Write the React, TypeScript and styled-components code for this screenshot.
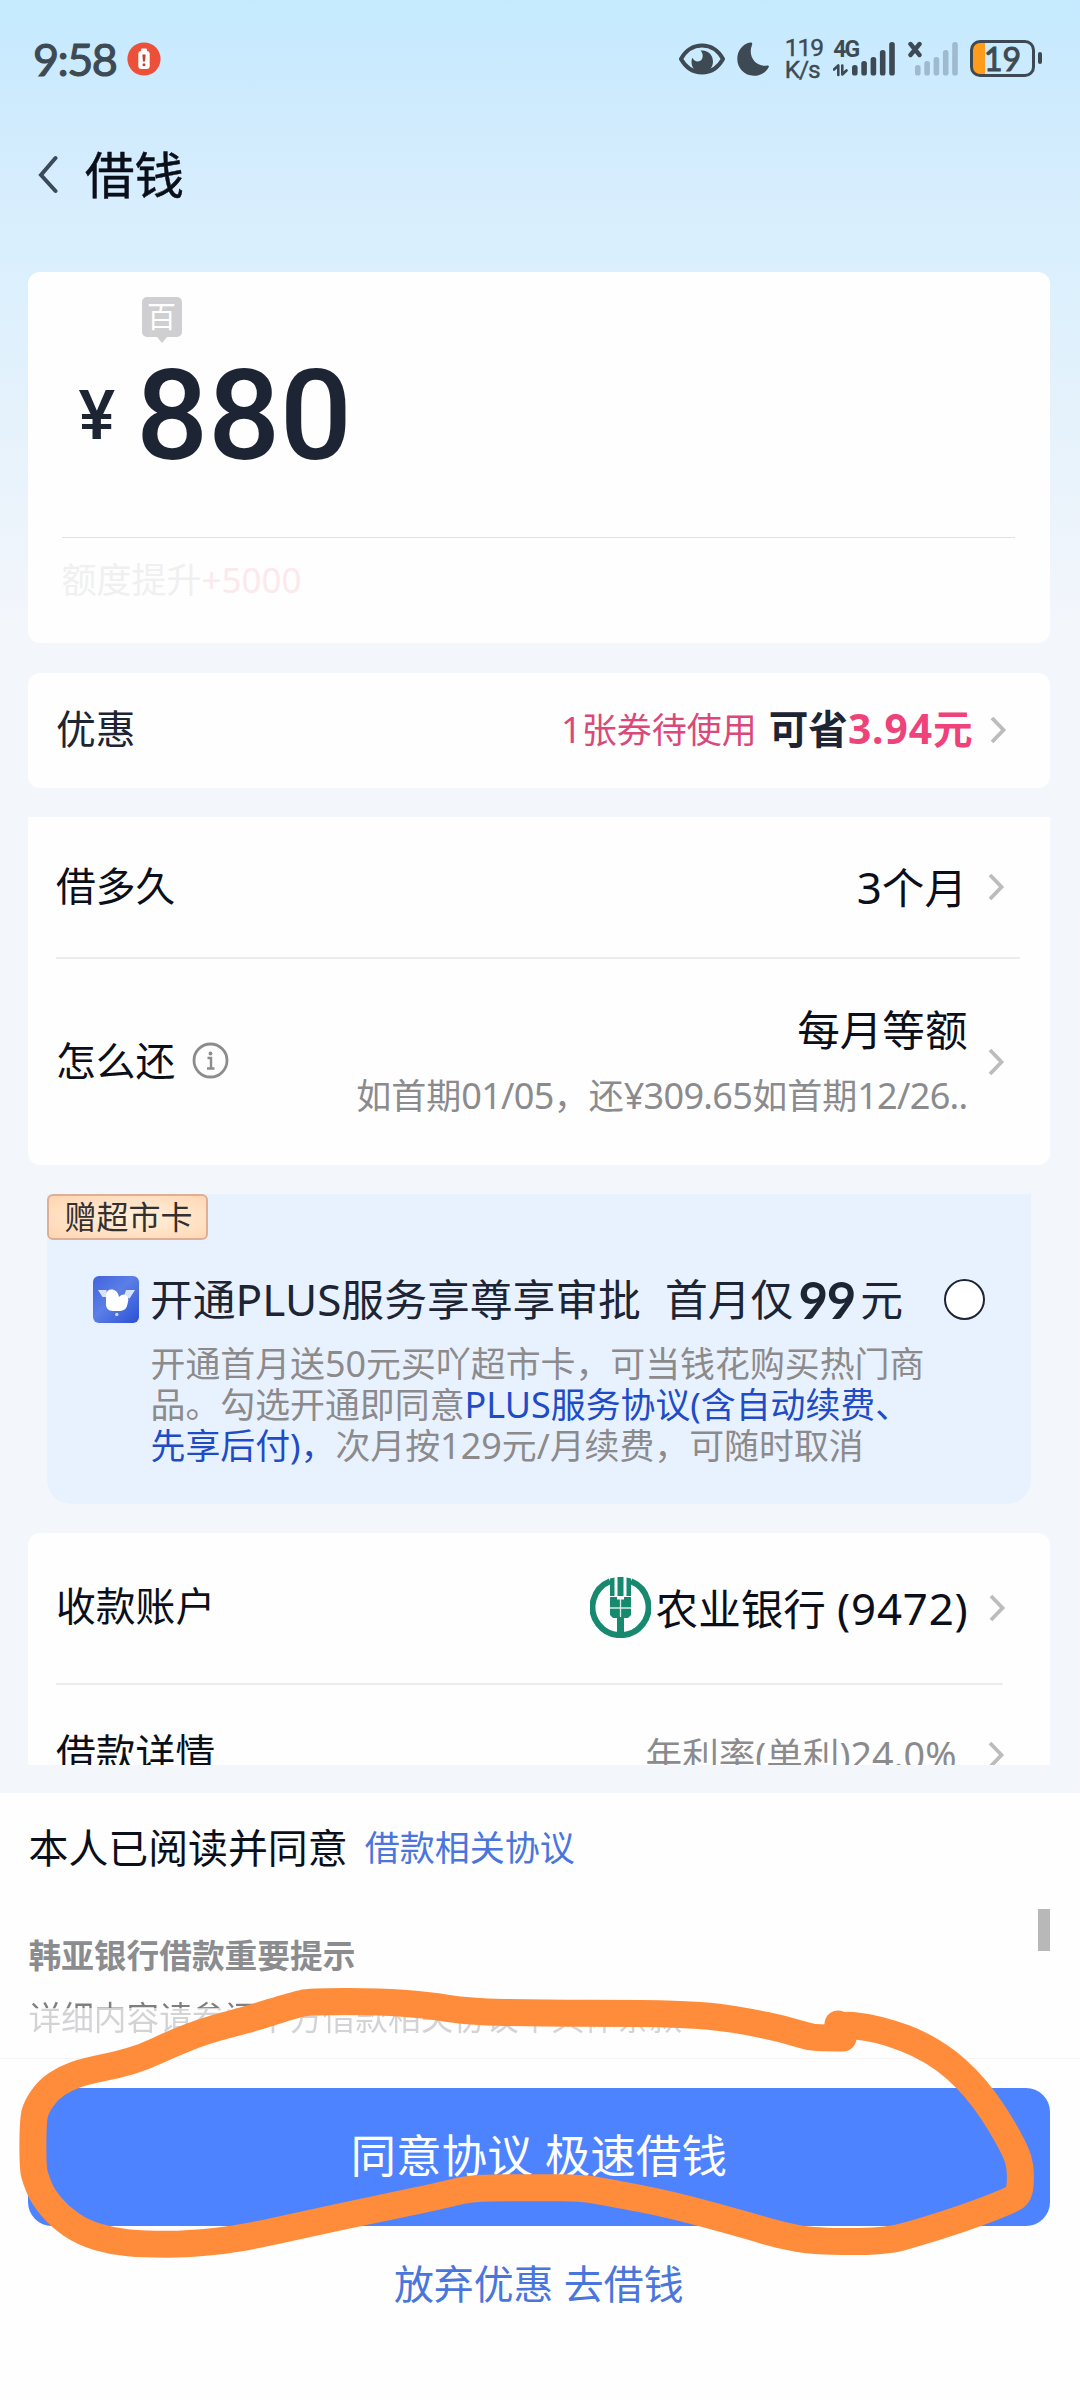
import React from "react";
import styled, { createGlobalStyle } from "styled-components";

const INK = "#0b0f1a";
const NAVY = "#1d2433";
const STATUS = "#3e4a53";
const BLUE = "#4a76dc";

const GlobalStyle = createGlobalStyle`
  *, *::before, *::after { box-sizing: border-box; }
  body { margin: 0; }
`;

const Page = styled.div`
  position: relative;
  width: 1080px;
  height: 2400px;
  overflow: hidden;
  display: flex;
  flex-direction: column;
  background: linear-gradient(180deg, #c5eaff 0, #d0ebfd 120px, #d8eefd 210px, #dcf0fd 290px, #e6f2fb 430px, #f3f6fb 620px, #f4f6fb 100%);
  font-family: "Noto Sans", "Noto Sans CJK SC", sans-serif;
  color: ${INK};
  white-space: nowrap;
`;

/* ---------- status bar ---------- */

const StatusBar = styled.header`
  height: 117px;
  padding: 0 38px 0 33px;
  display: flex;
  justify-content: space-between;
  align-items: center;
  color: ${STATUS};
`;

const StatusGroup = styled.div<{ $gap: number }>`
  display: flex;
  align-items: center;
  gap: ${(p) => p.$gap}px;
  svg { display: block; flex: none; }
`;

const Clock = styled.span`
  width: 83px;
  font: 400 45px/50px Lato, sans-serif;
  letter-spacing: -1.6px;
  -webkit-text-stroke: 1.1px ${STATUS};
`;

const NetSpeed = styled.div`
  width: 36px;
  margin-left: 3px;
  font: 400 24.5px/22px Roboto, sans-serif;
  letter-spacing: -1.1px;
  -webkit-text-stroke: 0.4px ${STATUS};
`;

const Signal = styled.div`
  width: 62px;
  height: 36px;
  position: relative;
`;

const NetType = styled.span`
  position: absolute;
  left: 0;
  top: -4px;
  font: 700 23px/26px Roboto, sans-serif;
  letter-spacing: -2px;
`;

const Battery = styled.div`
  width: 65px;
  height: 37px;
  margin-right: 7px;
  position: relative;
  border: 3px solid ${STATUS};
  border-radius: 10px;
  display: flex;
  align-items: center;
  justify-content: center;
  background: linear-gradient(90deg, #ff9c1c 11.5px, transparent 11.5px);
  font: 400 32px/31px Lato, sans-serif;
  -webkit-text-stroke: 1px ${STATUS};
  &::after {
    content: "";
    position: absolute;
    right: -10px;
    top: 9px;
    width: 4.5px;
    height: 12px;
    border-radius: 2px;
    background: ${STATUS};
  }
`;

/* ---------- navigation ---------- */

const NavBar = styled.nav`
  height: 155px;
  padding: 0 0 39px 38px;
  display: flex;
  align-items: center;
  gap: 27px;
`;

const NavTitle = styled.h1`
  margin: 0;
  font-size: 49.5px;
  line-height: 60px;
  font-weight: 400;
  -webkit-text-stroke: 0.5px ${INK};
`;

/* ---------- content ---------- */

const Content = styled.main`
  height: 1493px;
  overflow: hidden;
  padding: 0 30px 0 27.5px;
  display: flex;
  flex-direction: column;
`;

const Card = styled.section<{ $h: number; $mt?: number; $radius?: string }>`
  flex: none;
  height: ${(p) => p.$h}px;
  margin-top: ${(p) => p.$mt ?? 0}px;
  border-radius: ${(p) => p.$radius ?? "12px"};
  background: #fefefe;
`;

const AmountTop = styled.div`
  height: 266px;
  margin: 0 35px 0 34px;
  padding: 25px 0 0 16px;
  border-bottom: 1.5px solid #e2e2e4;
`;

const UnitBadge = styled.div`
  position: relative;
  width: 40px;
  height: 40px;
  margin-left: 64px;
  border-radius: 5px;
  background: #cfcfd1;
  color: #fff;
  display: flex;
  align-items: center;
  justify-content: center;
  font: 400 29px/40px "Noto Sans", "Noto Sans CJK SC", sans-serif;
  &::after {
    content: "";
    position: absolute;
    left: 15px;
    top: 40px;
    border: 5px solid transparent;
    border-top: 6px solid #cfcfd1;
    border-bottom: 0;
  }
`;

const Amount = styled.div`
  height: 150px;
  margin-top: 4px;
  display: flex;
  align-items: center;
  color: ${NAVY};
  font-family: Roboto, sans-serif;
  font-weight: 500;
`;

const Yen = styled.span`
  width: 58.5px;
  padding-left: 1px;
  font-size: 69px;
  line-height: 80px;
`;

const Figure = styled.span`
  font-size: 127px;
  line-height: 150px;
  letter-spacing: -0.3px;
`;

const Boost = styled.p`
  margin: 0;
  padding: 22px 0 0 34px;
  font-size: 35px;
  line-height: 40px;
  color: #f0f0f1;
`;

const BoostValue = styled.span`
  color: #fce9ed;
`;

const Row = styled.div<{ $h: number; $pr?: number }>`
  height: ${(p) => p.$h}px;
  padding: 0 ${(p) => p.$pr ?? 45.5}px 0 28.5px;
  display: flex;
  align-items: center;
  justify-content: space-between;
`;

const Label = styled.span<{ $color?: string; $lift?: number }>`
  display: inline-flex;
  align-items: center;
  gap: 16.5px;
  padding-bottom: ${(p) => p.$lift ?? 2}px;
  font-size: 39.8px;
  line-height: 48px;
  color: ${(p) => p.$color ?? INK};
`;

const Value = styled.div<{ $gap?: number }>`
  display: flex;
  align-items: center;
  gap: ${(p) => p.$gap ?? 22}px;
  svg { display: block; flex: none; }
`;

const ChevronSlot = styled.span`
  margin-left: 17px;
`;

const ValueText = styled.span`
  font-size: 42.6px;
  line-height: 52px;
`;

const Num = styled.span<{ $track?: number }>`
  font-size: 1.03em;
  letter-spacing: ${(p) => p.$track ?? 0}px;
`;

const Stack = styled.div`
  display: flex;
  flex-direction: column;
  align-items: flex-end;
  gap: 15px;
`;

const Muted = styled.span<{ $size?: number }>`
  font-size: ${(p) => p.$size ?? 35}px;
  line-height: 50px;
  color: #8b8b8e;
`;

const Coupon = styled.span`
  padding-bottom: 2px;
  font-size: 35px;
  line-height: 46px;
  color: #d94a7a;
`;

const Saving = styled.span`
  margin-left: 12px;
  padding-bottom: 3px;
  font-size: 39.6px;
  line-height: 48px;
  font-weight: 700;
  color: ${NAVY};
`;

const Pink = styled.span`
  color: #ee437a;
`;

const Line = styled.hr<{ $right: number }>`
  height: 2px;
  margin: 0 ${(p) => p.$right}px 0 28.5px;
  border: 0;
  background: #ececec;
`;

/* ---------- membership offer ---------- */

const Offer = styled.section`
  flex: none;
  height: 310px;
  margin: 29px 19px 0 19.5px;
  border-radius: 0 0 24px 24px;
  background: #e8f2ff;
`;

const OfferTag = styled.div`
  width: 161px;
  height: 46px;
  border: 2px solid #dfae96;
  border-radius: 6px;
  background: radial-gradient(ellipse at 55% 50%, #fff0dc 0, #ffe6cc 40%, #ffd5b0 100%);
  display: flex;
  align-items: center;
  justify-content: center;
  padding-left: 2px;
  font-size: 32px;
  line-height: 42px;
  color: #35302e;
`;

const OfferHead = styled.div`
  height: 56px;
  margin-top: 32px;
  padding: 0 46px;
  display: flex;
  align-items: center;
  color: ${NAVY};
  font-size: 42.8px;
  line-height: 56px;
  svg { display: block; flex: none; }
`;

const OfferTitle = styled.span`
  margin-left: 11px;
`;

const OfferPrice = styled.span`
  margin-left: 24px;
  display: flex;
  align-items: center;
`;

const PriceNum = styled.b`
  width: 67px;
  text-align: center;
  font: 700 51px/56px Lato, sans-serif;
  letter-spacing: -1.2px;
`;

const Radio = styled.span`
  width: 41px;
  height: 41px;
  margin-left: auto;
  border: 2.5px solid ${NAVY};
  border-radius: 50%;
  background: #fff;
`;

const OfferText = styled.p`
  margin: 15px 0 0 103.5px;
  font-size: 34.9px;
  line-height: 41px;
  color: #8d8a8b;
`;

const Terms = styled.span`
  color: #1f4cc6;
`;

/* ---------- footer ---------- */

const Footer = styled.footer`
  height: 607px;
  margin-top: 28px;
  background: #fefefe;
`;

const Notice = styled.div`
  height: 266px;
  padding: 30px 30px 0 28.5px;
  border-bottom: 1px solid #f5f5f5;
`;

const Agree = styled.div`
  display: flex;
  align-items: center;
  gap: 17px;
  font-size: 39.9px;
  line-height: 50px;
`;

const AgreeLink = styled.a`
  font-size: 35px;
  color: ${BLUE};
`;

const NoticeScroll = styled.div`
  height: 149px;
  margin-top: 36px;
  display: flex;
  justify-content: space-between;
`;

const NoticeText = styled.div`
  font-size: 32.7px;
  line-height: 44px;
  color: #8b8c90;
`;

const NoticeTitle = styled.div`
  margin-top: 25px;
  font-weight: 700;
`;

const NoticeBody = styled.div`
  margin-top: 18px;
  color: transparent;
  background: linear-gradient(180deg, #7e7e80 12px, #d3d3d5 12px);
  background-clip: text;
  -webkit-background-clip: text;
`;

const Thumb = styled.div`
  width: 12px;
  height: 42px;
  background: #b8b8b8;
`;

const Actions = styled.div`
  padding: 29px 30px 0 27.5px;
  display: flex;
  flex-direction: column;
  align-items: center;
`;

const Primary = styled.button`
  width: 100%;
  height: 138px;
  padding: 0 0 4px 0;
  border: 0;
  border-radius: 24px;
  background: #4d83ff;
  color: #fff;
  font: 400 45.6px/60px "Noto Sans", "Noto Sans CJK SC", sans-serif;
`;

const Secondary = styled.a`
  margin-top: 33px;
  font-size: 39.9px;
  line-height: 50px;
  color: ${BLUE};
`;

const Scribble = styled.svg`
  position: absolute;
  left: 0;
  top: 1960px;
  pointer-events: none;
`;

/* ---------- drawings ---------- */

const Chevron = () => (
  <svg width="17" height="28" viewBox="0 0 17 28" fill="none" stroke="#bcbcbc" strokeWidth="3.8">
    <path d="M2 2L13.500 14L2 26" />
  </svg>
);

const BackIcon = () => (
  <svg width="20" height="40" viewBox="0 0 20 40" fill="none" stroke="#3b4a58" strokeWidth="4" strokeLinecap="round">
    <path d="M17.500 3L3 20L17.500 36" />
  </svg>
);

const LowBattery = () => (
  <svg width="34" height="34" viewBox="0 0 34 34">
    <circle cx="17" cy="17" r="16.600" fill="#ec5039" />
    <rect x="14" y="6.500" width="6" height="4" rx="1" fill="#fff" />
    <rect x="11.300" y="9" width="11.400" height="18" rx="3" fill="#fff" />
    <path d="M15.400 12.500h3.200l-.5 7h-2.200z" fill="#b8452f" />
    <circle cx="17" cy="22.700" r="1.500" fill="#b8452f" />
  </svg>
);

const EyeIcon = () => (
  <svg width="46" height="32" viewBox="0 0 46 32">
    <path d="M2 16C7 7 14.500 2.500 23 2.500S39 7 44 16C39 25 31.500 29.500 23 29.500S7 25 2 16Z" fill="none" stroke={STATUS} strokeWidth="4" strokeLinejoin="round" />
    <path d="M21.500 7.500C29 6.500 34 12 34 18.500C34 25 29 29.500 23.500 29.500C17 29.500 12.500 25 12.500 19C12.500 17.500 12.800 16 13.300 14.800C15 18.300 18.500 19.500 21.300 17.800C24.500 15.800 24.500 10.500 21.500 7.500Z" fill={STATUS} />
  </svg>
);

const MoonIcon = () => (
  <svg width="32" height="34" viewBox="0 0 32 34">
    <path d="M13 .5C15 .3 15.700 1.300 15 3C10.500 14 18.500 25.500 30 23.500C31.800 23.200 32.300 24.200 31.500 25.500C28.500 31 23 33.700 16.800 33.700C7.500 33.700 .3 26.300 .3 17C.3 8.500 5.500 2 13 .5Z" fill={STATUS} />
  </svg>
);

const BAR_TOPS = [24, 20, 16, 9, 1];

const Bars = ({ x, color }: { x: number; color: string }) => (
  <g fill={color}>
    {BAR_TOPS.map((top, i) => (
      <rect key={top} x={x + i * 9.3} y={top} width="5.600" height={34.500 - top} rx="2.600" />
    ))}
  </g>
);

const DataBars = () => (
  <svg width="62" height="36" viewBox="0 0 62 36">
    <path d="M1 28.500L5.300 24.500V34M9.300 24.500V33.500L13.500 29.500" fill="none" stroke={STATUS} strokeWidth="2.600" strokeLinejoin="round" strokeLinecap="round" />
    <Bars x={19} color={STATUS} />
  </svg>
);

const NoBars = () => (
  <svg width="50" height="36" viewBox="0 0 50 36">
    <path d="M2.500 3L11.500 14M11.500 3L2.500 14" stroke={STATUS} strokeWidth="4.400" strokeLinecap="round" />
    <Bars x={7} color="#9fbace" />
  </svg>
);

const InfoIcon = () => (
  <svg width="37" height="37" viewBox="0 0 37 37" fill="none" stroke="#8c8c8f">
    <circle cx="18.500" cy="18.500" r="16.500" strokeWidth="2.800" />
    <path d="M15.500 16h3.500v10.500M15 26.500h7.500" strokeWidth="2.400" />
    <circle cx="18.500" cy="11.500" r="1.900" fill="#8c8c8f" stroke="none" />
  </svg>
);

const BirdLogo = () => (
  <svg width="46" height="47" viewBox="0 0 46 47">
    <defs>
      <linearGradient id="bird" x1="0" y1="0" x2="1" y2="1">
        <stop offset="0" stopColor="#4163dd" />
        <stop offset=".45" stopColor="#5b7fe6" />
        <stop offset="1" stopColor="#2a50d6" />
      </linearGradient>
    </defs>
    <rect width="46" height="47" rx="6" fill="url(#bird)" />
    <path d="M5 14H13.500L14 21H9.500Z M33 14H42L36.500 22.500L31 20Z" fill="#d9e4fb" />
    <path d="M13 20C13 13.500 18 13 21 14C24 15 25.500 18 26 21C28 18.500 31 17.500 33.500 19.500C36 21.500 35.500 25 34.500 28C33.500 33 31 35 26 35H20C15 35 13 32 13 28Z" fill="#fff" />
    <circle cx="23.800" cy="38.500" r="1.700" fill="#c9d6fa" />
  </svg>
);

const BankLogo = () => (
  <svg width="61" height="61" viewBox="0 0 61 61">
    <path d="M20 4.200A28 28 0 1 0 41 4.200" fill="none" stroke="#17896e" strokeWidth="6" />
    <path d="M20 1.500L24.500 .5V19H20ZM36.500 .5L41 1.500V19H36.500ZM27.500 0H33.500V19H27.500Z" fill="#17896e" />
    <path d="M20 20H27V22.500H34V20H41V38L38 41H34V58H27V41H23L20 38Z" fill="#17896e" />
    <path d="M30.500 22V40M20 31H41" stroke="#d8f0e8" strokeWidth="1.300" />
  </svg>
);

const MARKER: [number, number][] = [
  [843, 2038], [818, 2038], [806, 2036], [781, 2028.5], [750, 2022], [719, 2017], [680, 2014], [640, 2013.3],
  [540, 2013.3], [468, 2011.700], [427, 2005], [379, 2001.500], [310, 2001.700], [294, 2005], [248, 2019.500],
  [206, 2030.500], [172, 2043.700], [144, 2057], [117, 2065], [86, 2071], [65, 2078.500], [48, 2090],
  [37, 2106], [33, 2119], [32.800, 2168], [36, 2180], [43, 2196.700], [60, 2217], [83, 2232.500], [113, 2241.500],
  [144, 2244.300], [189, 2244.300], [241, 2238.500], [310, 2223.300], [372, 2210], [444, 2195], [460, 2190.500], [482, 2187.700],
  [540, 2187.700], [581, 2187.700], [609, 2192.500], [671, 2204.500], [746, 2225], [781, 2235.500], [815, 2241.500],
  [884, 2241.700], [919, 2232.500], [970, 2216], [1005, 2202.500], [1018, 2196], [1020.400, 2185],
  [1020.400, 2167], [1016, 2152], [1001, 2124.500], [984, 2099], [967, 2079], [946, 2060], [919, 2043.500],
  [891, 2033], [867, 2027], [838, 2024], [843, 2038],
];

const markerPath = MARKER.slice(1, -1).reduce((d, [x, y], i) => {
  const [nx, ny] = MARKER[i + 2];
  return `${d}Q${x} ${y} ${(x + nx) / 2} ${(y + ny) / 2}`;
}, `M${MARKER[0][0]} ${MARKER[0][1]}`) + "L838 2024L843 2038";

export default function App() {
  return (
    <Page>
      <GlobalStyle />
      <StatusBar>
        <StatusGroup $gap={11}>
          <Clock>9:58</Clock>
          <LowBattery />
        </StatusGroup>
        <StatusGroup $gap={12.4}>
          <EyeIcon />
          <MoonIcon />
          <NetSpeed>119<br />K/s</NetSpeed>
          <Signal>
            <NetType>4G</NetType>
            <DataBars />
          </Signal>
          <NoBars />
          <Battery>19</Battery>
        </StatusGroup>
      </StatusBar>

      <NavBar>
        <BackIcon />
        <NavTitle>借钱</NavTitle>
      </NavBar>

      <Content>
        <Card $h={371}>
          <AmountTop>
            <UnitBadge>百</UnitBadge>
            <Amount>
              <Yen>¥</Yen>
              <Figure>880</Figure>
            </Amount>
          </AmountTop>
          <Boost>额度提升<BoostValue>+5000</BoostValue></Boost>
        </Card>

        <Card $h={115} $mt={29.500}>
          <Row $h={115} $pr={43.500}>
            <Label $color={NAVY} $lift={3}>优惠</Label>
            <Value $gap={0}>
              <Coupon><Num>1</Num>张券待使用</Coupon>
              <Saving>可省<Pink><Num $track={0.9}>3.94</Num>元</Pink></Saving>
              <ChevronSlot><Chevron /></ChevronSlot>
            </Value>
          </Row>
        </Card>

        <Card $h={348} $mt={29} $radius="0 0 12px 12px">
          <Row $h={140}>
            <Label>借多久</Label>
            <Value $gap={20.500}>
              <ValueText><Num>3</Num>个月</ValueText>
              <Chevron />
            </Value>
          </Row>
          <Line $right={30} />
          <Row $h={206}>
            <Label>怎么还<InfoIcon /></Label>
            <Value $gap={20}>
              <Stack>
                <ValueText>每月等额</ValueText>
                <Muted>如首期<Num $track={-0.7}>01/05</Num>，还<Num $track={-0.7}>¥309.65</Num>如首期<Num $track={-0.7}>12/26..</Num></Muted>
              </Stack>
              <Chevron />
            </Value>
          </Row>
        </Card>

        <Offer>
          <OfferTag>赠超市卡</OfferTag>
          <OfferHead>
            <BirdLogo />
            <OfferTitle>开通<Num>PLUS</Num>服务享尊享审批</OfferTitle>
            <OfferPrice>首月仅<PriceNum>99</PriceNum>元</OfferPrice>
            <Radio />
          </OfferHead>
          <OfferText>
            开通首月送<Num>50</Num>元买吖超市卡，可当钱花购买热门商<br />
            品。勾选开通即同意<Terms><Num>PLUS</Num>服务协议(含自动续费、</Terms><br />
            <Terms>先享后付)，</Terms>次月按<Num>129</Num>元/月续费，可随时取消
          </OfferText>
        </Offer>

        <Card $h={300} $mt={29}>
          <Row $h={150} $pr={44}>
            <Label $lift={4}>收款账户</Label>
            <Value $gap={20.500}>
              <Value $gap={5}>
                <BankLogo />
                <ValueText>农业银行 <Num $track={0.8}>(9472)</Num></ValueText>
              </Value>
              <Chevron />
            </Value>
          </Row>
          <Line $right={47} />
          <Row $h={141}>
            <Label $lift={5}>借款详情</Label>
            <Value $gap={31}>
              <Muted $size={36.600}>年利率(单利)<Num>24.0%</Num></Muted>
              <Chevron />
            </Value>
          </Row>
        </Card>
      </Content>

      <Footer>
        <Notice>
          <Agree>
            <span>本人已阅读并同意</span>
            <AgreeLink>借款相关协议</AgreeLink>
          </Agree>
          <NoticeScroll>
            <NoticeText>
              <NoticeTitle>韩亚银行借款重要提示</NoticeTitle>
              <NoticeBody>详细内容请参阅下方借款相关协议中具体条款</NoticeBody>
            </NoticeText>
            <Thumb />
          </NoticeScroll>
        </Notice>
        <Actions>
          <Primary>同意协议 极速借钱</Primary>
          <Secondary>放弃优惠 去借钱</Secondary>
        </Actions>
      </Footer>

      <Scribble width="1080" height="320" viewBox="0 1960 1080 320" fill="none">
        <path d={markerPath} stroke="#ff8c3a" strokeWidth="27" strokeLinecap="round" strokeLinejoin="round" />
      </Scribble>
    </Page>
  );
}
